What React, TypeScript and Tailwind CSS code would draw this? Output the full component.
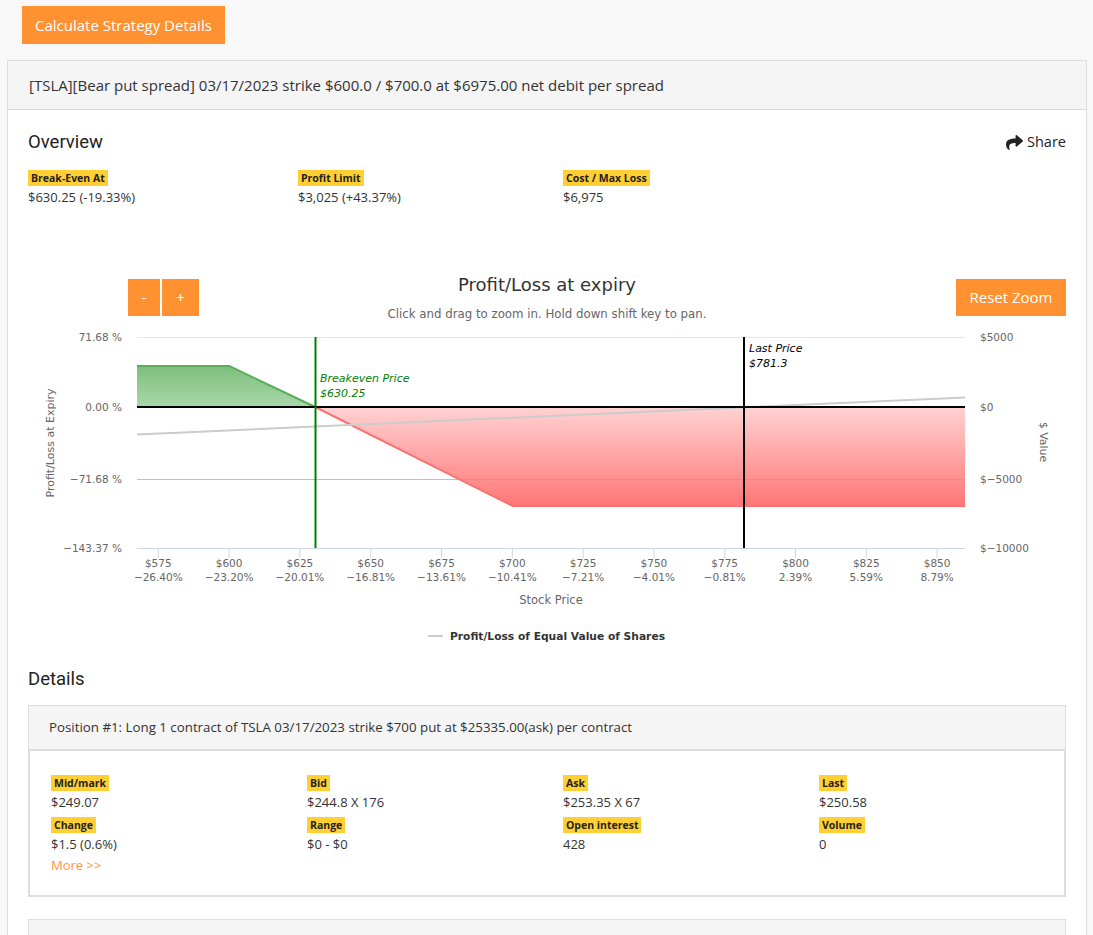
import React from "react";

const orange = "bg-[#ff9130]";

const xTicks = [
  { p: "$575", pct: "−26.40%" },
  { p: "$600", pct: "−23.20%" },
  { p: "$625", pct: "−20.01%" },
  { p: "$650", pct: "−16.81%" },
  { p: "$675", pct: "−13.61%" },
  { p: "$700", pct: "−10.41%" },
  { p: "$725", pct: "−7.21%" },
  { p: "$750", pct: "−4.01%" },
  { p: "$775", pct: "−0.81%" },
  { p: "$800", pct: "2.39%" },
  { p: "$825", pct: "5.59%" },
  { p: "$850", pct: "8.79%" },
];

const yRows = [
  { y: 337, left: "71.68 %", right: "$5000" },
  { y: 407, left: "0.00 %", right: "$0" },
  { y: 479, left: "−71.68 %", right: "$−5000" },
  { y: 548, left: "−143.37 %", right: "$−10000" },
];

function Label({ children }: { children: React.ReactNode }) {
  return (
    <span className="block bg-[#ffcf33] px-[3px] text-[10.5px] font-bold leading-[16px] text-[#222]">
      {children}
    </span>
  );
}

function Stat({ label, value }: { label: string; value: string }) {
  return (
    <div className="flex flex-col items-start">
      <Label>{label}</Label>
      <div className="mt-[3px] text-[13px] leading-[17px] text-[#333]">{value}</div>
    </div>
  );
}

function ShareIcon() {
  return (
    <svg width="17" height="17" viewBox="0 0 512 512" fill="#222">
      <path d="M503.691 189.836L327.687 37.851C312.281 24.546 288 35.347 288 56.015v80.053C127.371 137.907 0 170.1 0 322.326c0 61.441 39.581 122.309 83.333 154.132 13.653 9.931 33.111-2.533 28.077-18.631C66.066 312.814 132.917 274.316 288 272.085V360c0 20.7 24.3 31.453 39.687 18.164l176.004-152c11.071-9.562 11.086-26.753 0-36.328z" />
    </svg>
  );
}

function Chart() {
  const chartFont = "'DejaVu Sans', sans-serif";
  return (
    <div className="relative mt-[52px] h-[395px]">
      <svg width="1038" height="395" viewBox="28 258 1038 395" style={{ fontFamily: chartFont }}>
        <defs>
          <linearGradient id="gGreen" x1="0" y1="0" x2="0" y2="1">
            <stop offset="0" stopColor="#7dbf7d" />
            <stop offset="1" stopColor="#a9d8a9" />
          </linearGradient>
          <linearGradient id="gRed" x1="0" y1="0" x2="0" y2="1">
            <stop offset="0" stopColor="#ffd2d2" />
            <stop offset="1" stopColor="#ff7676" />
          </linearGradient>
        </defs>
        <text x="547" y="291" textAnchor="middle" fontSize="17" fill="#333" textLength="178" lengthAdjust="spacingAndGlyphs">
          Profit/Loss at expiry
        </text>
        <text x="547" y="318" textAnchor="middle" fontSize="11.5" fill="#666" textLength="319" lengthAdjust="spacingAndGlyphs">
          Click and drag to zoom in. Hold down shift key to pan.
        </text>

        <line x1="137" y1="337.5" x2="965" y2="337.5" stroke="#e6e6e6" />
        <line x1="137" y1="479.5" x2="965" y2="479.5" stroke="#e6e6e6" />

        <polygon points="137,366 229.3,366 315.2,407 137,407" fill="url(#gGreen)" />
        <polyline points="137,366 229.3,366 315.2,407" fill="none" stroke="#5cae5c" strokeWidth="2" />
        <polygon points="315.2,407 512.5,506 965,506 965,407" fill="url(#gRed)" />
        <polyline points="315.2,407 512.5,506 965,506" fill="none" stroke="#ff7070" strokeWidth="2" />
        <line x1="137" y1="479.5" x2="965" y2="479.5" stroke="#e08080" strokeOpacity="0.5" />

        <line x1="137" y1="434.5" x2="965" y2="397.5" stroke="#cccccc" strokeWidth="2" />
        <line x1="137" y1="407" x2="965" y2="407" stroke="#000" strokeWidth="2" />

        <line x1="137" y1="548.5" x2="965" y2="548.5" stroke="#ccd6eb" />
        {xTicks.map((t, i) => {
          const x = 158.3 + i * 70.8;
          return (
            <g key={t.p}>
              <line x1={x} y1="548" x2={x} y2="558" stroke="#ccd6eb" />
              <text x={x} y="567" textAnchor="middle" fontSize="10.5" fill="#666">
                {t.p}
              </text>
              <text x={x} y="581" textAnchor="middle" fontSize="10.5" fill="#666">
                {t.pct}
              </text>
            </g>
          );
        })}

        <line x1="315.5" y1="337" x2="315.5" y2="548" stroke="#008000" strokeWidth="2" />
        <text x="320" y="382" fontSize="11" fontStyle="italic" fill="#008000">Breakeven Price</text>
        <text x="320" y="397" fontSize="11" fontStyle="italic" fill="#008000">$630.25</text>

        <line x1="744" y1="337" x2="744" y2="548" stroke="#000" strokeWidth="2" />
        <text x="749" y="352" fontSize="11" fontStyle="italic" fill="#000">Last Price</text>
        <text x="749" y="367" fontSize="11" fontStyle="italic" fill="#000">$781.3</text>

        {yRows.map((r) => (
          <g key={r.left}>
            <text x="122" y={r.y + 4} textAnchor="end" fontSize="10.5" fill="#666">
              {r.left}
            </text>
            <text x="980" y={r.y + 4} fontSize="10.5" fill="#666">
              {r.right}
            </text>
          </g>
        ))}

        <text x="54" y="443" textAnchor="middle" fontSize="11" fill="#666" transform="rotate(-90 54 443)">
          Profit/Loss at Expiry
        </text>
        <text x="1040" y="442" textAnchor="middle" fontSize="11" fill="#666" transform="rotate(90 1040 442)">
          $ Value
        </text>

        <text x="551" y="604" textAnchor="middle" fontSize="11.5" fill="#666">Stock Price</text>

        <line x1="428" y1="636" x2="443" y2="636" stroke="#cccccc" strokeWidth="2" />
        <text x="450" y="640" fontSize="11" fontWeight="bold" fill="#333" textLength="215" lengthAdjust="spacingAndGlyphs">
          Profit/Loss of Equal Value of Shares
        </text>
      </svg>

      <div className="absolute left-[100px] top-[21px] flex gap-[2px]">
        <button className={`${orange} h-[37px] w-[32px] text-[15px] text-white`}>-</button>
        <button className={`${orange} h-[37px] w-[37px] text-[15px] text-white`}>+</button>
      </div>
      <button className={`${orange} absolute right-0 top-[21px] h-[37px] w-[110px] text-[15px] text-white`}>
        Reset Zoom
      </button>
    </div>
  );
}

export default function App() {
  return (
    <div className="min-h-screen bg-[#f8f8f8] pt-[6px] pb-10 font-['Open_Sans',sans-serif] text-[#333]">
      <div className="pl-[22px]">
        <button className={`${orange} h-[38px] px-[13px] text-[15px] text-white`}>Calculate Strategy Details</button>
      </div>

      <div className="ml-[7px] mr-[6px] mt-[16px] border border-[#ddd] bg-white">
        <div className="flex h-[49px] items-center border-b border-[#ddd] bg-[#f5f5f5] px-[21px] text-[15px] text-[#333]">
          [TSLA][Bear put spread] 03/17/2023 strike $600.0 / $700.0 at $6975.00 net debit per spread
        </div>

        <div className="px-[20px] pt-[20px]">
          <div className="flex items-center justify-between">
            <h2 className="font-['Roboto',sans-serif] text-[18.5px] leading-[24px] text-[#222]">Overview</h2>
            <div className="flex items-center gap-[4px] text-[14.5px] text-[#222]">
              <ShareIcon />
              <span>Share</span>
            </div>
          </div>

          <div className="mt-[16px] grid grid-cols-[270px_265px_1fr]">
            <Stat label="Break-Even At" value="$630.25 (-19.33%)" />
            <Stat label="Profit Limit" value="$3,025 (+43.37%)" />
            <Stat label="Cost / Max Loss" value="$6,975" />
          </div>

          <Chart />

          <h2 className="mt-[14px] font-['Roboto',sans-serif] text-[18.5px] leading-[24px] text-[#222]">Details</h2>

          <div className="mt-[14px] border border-[#ddd]">
            <div className="flex h-[44px] items-center bg-[#f5f5f5] px-[20px] text-[13.3px] text-[#333]">
              Position #1: Long 1 contract of TSLA 03/17/2023 strike $700 put at $25335.00(ask) per contract
            </div>
            <div className="-m-px border-2 border-[#ddd] bg-white px-[21px] pb-[21px] pt-[24px]">
              <div className="grid grid-cols-[256px_256px_256px_1fr] gap-y-[6px]">
                <Stat label="Mid/mark" value="$249.07" />
                <Stat label="Bid" value="$244.8 X 176" />
                <Stat label="Ask" value="$253.35 X 67" />
                <Stat label="Last" value="$250.58" />
                <Stat label="Change" value="$1.5 (0.6%)" />
                <Stat label="Range" value="$0 - $0" />
                <Stat label="Open interest" value="428" />
                <Stat label="Volume" value="0" />
              </div>
              <div className="mt-[4px] text-[13px] leading-[17px] text-[#ff9446]">More &gt;&gt;</div>
            </div>
          </div>

          <div className="mt-[22px] border border-[#ddd]">
            <div className="h-[44px] bg-[#f5f5f5]" />
            <div className="h-[150px] bg-white" />
          </div>
        </div>
      </div>
    </div>
  );
}
